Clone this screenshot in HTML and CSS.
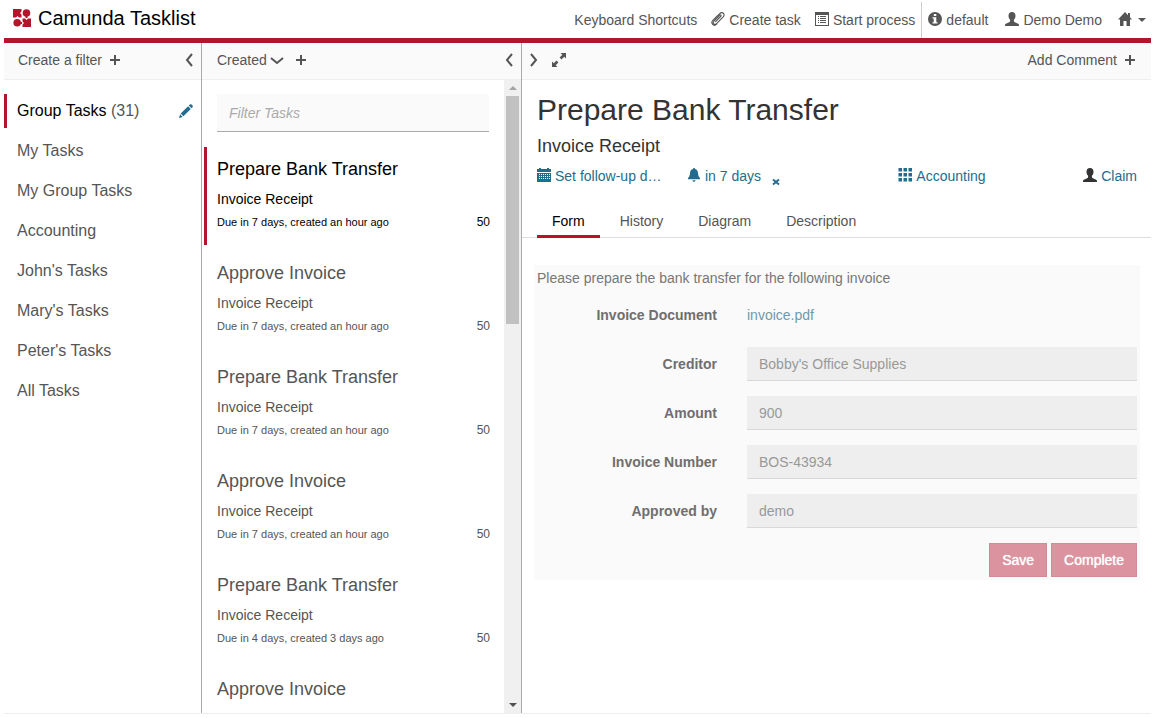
FILE: index.html
```html
<!DOCTYPE html>
<html lang="en">
<head>
<meta charset="utf-8">
<title>Camunda Tasklist</title>
<link rel="stylesheet" href="styles.css">
</head>
<body>
<svg class="sprite" aria-hidden="true">
  <symbol id="plus" viewBox="0 0 14 14"><path d="M6 2h2v4h4v2H8v4H6V8H2V6h4z"/></symbol>
  <symbol id="left" viewBox="0 0 14 14"><path d="M10 1 5 7l5 6" fill="none" stroke="currentColor" stroke-width="2"/></symbol>
  <symbol id="right" viewBox="0 0 14 14"><path d="m5 1 5 6-5 6" fill="none" stroke="currentColor" stroke-width="2"/></symbol>
  <symbol id="down" viewBox="0 0 14 14"><path d="m1 5 6 5 6-5" fill="none" stroke="currentColor" stroke-width="2"/></symbol>
  <symbol id="user" viewBox="0 0 14 14"><path d="M7 0c2.300 0 3.500 1.500 3.500 3.800 0 1.800-.7 3.200-1.600 4v1.300c0 .5.400.8 1 1.100l2.700 1.200c.9.400 1.400.8 1.400 1.600v1H0v-1c0-.8.500-1.200 1.400-1.600l2.700-1.200c.6-.3 1-.6 1-1.100V7.800c-.9-.8-1.600-2.200-1.600-4C3.500 1.500 4.700 0 7 0z"/></symbol>
  <symbol id="home" viewBox="0 0 14 14"><path d="M7 0 0 7.500h2V14h3.500V9h3v5H12V7.500h2l-2-2.200V1h-2v2.200z"/></symbol>
  <symbol id="info" viewBox="0 0 14 14"><path fill-rule="evenodd" d="M7 0a7 7 0 1 1 0 14A7 7 0 0 1 7 0zM5.800 2v2h2.500V2zM4.500 5.300v1.200h1.200v3.700H4.500v1.300h5v-1.300H8.300V5.300z"/></symbol>
  <symbol id="clip" viewBox="0 0 14 14"><path d="m4.600 9.700 5-5.200c1.100-1.200 0-2.200-1.100-1.100L3 9c-2 2.200.6 4.600 2.600 2.600l6.600-6.700c2.600-2.800-.9-5.800-3.500-3.300L2 8.200C-.9 11.300 2.700 15 5.700 12.200" fill="none" stroke="currentColor" stroke-width="1.100" stroke-linecap="round"/></symbol>
  <symbol id="list" viewBox="0 0 14 14"><path fill-rule="evenodd" d="M0 0h14v14H0zM1 3v10h12V3z"/><path d="M3 4h1v1H3zm2 0h6v1H5zM3 6h1v1H3zm2 0h6v1H5zM3 8h1v1H3zm2 0h6v1H5zM3 10h1v1H3zm2 0h6v1H5z"/></symbol>
  <symbol id="pencil" viewBox="0 0 14 14"><path d="M10.800.5c.5-.5 1.200-.5 1.700 0l1 1c.5.500.5 1.200 0 1.700l-1 1-2.700-2.700zM9.100 2.200l2.700 2.700-7.400 7.400-2.700-2.700zM1.100 10.300l2.600 2.600L0 14z"/></symbol>
  <symbol id="expand" viewBox="0 0 14 14"><path d="M8.500 0H14v5.500L12.200 3.700 9.500 6.400 7.600 4.500l2.700-2.700zM0 14V8.500l1.800 1.800 2.700-2.700 1.900 1.900-2.700 2.700L5.500 14z"/></symbol>
  <symbol id="calendar" viewBox="0 0 14 14"><path fill-rule="evenodd" d="M0 1h2V0h2v1h6V0h2v1h2v13H0zM0 4v1h14V4zM2 6v1h1V6zm2 0v1h1V6zm2 0v1h1V6zm2 0v1h1V6zm2 0v1h1V6zm2 0v1h1V6zM2 8v1h1V8zm2 0v1h1V8zm2 0v1h1V8zm2 0v1h1V8zm2 0v1h1V8zm2 0v1h1V8zM2 10v1h1v-1zm2 0v1h1v-1zm2 0v1h1v-1zm2 0v1h1v-1zm2 0v1h1v-1zm2 0v1h1v-1z"/></symbol>
  <symbol id="bell" viewBox="0 0 14 14"><path d="M7 0c.7 0 1 .5 1 1.100 1.800.4 2.800 1.900 3 3.900.2 2.400.6 3.700 2 5v1.200H1V10c1.400-1.300 1.800-2.600 2-5 .2-2 1.200-3.500 3-3.900C6 .5 6.300 0 7 0zM5.500 12.200h3c0 .9-.6 1.500-1.500 1.500s-1.500-.6-1.500-1.500z"/></symbol>
  <symbol id="grid" viewBox="0 0 14 14"><path d="M.5 0h3.500v3.500H.5zM5.500 0h3.500v3.500H5.500zM10.500 0H14v3.500h-3.500zM.5 5h3.500v3.500H.5zM5.500 5h3.500v3.500H5.500zM10.500 5H14v3.500h-3.500zM.5 10h3.500v3.500H.5zM5.500 10h3.500v3.500H5.500zM10.500 10H14v3.500h-3.500z"/></symbol>
  <symbol id="cross" viewBox="0 0 8 8"><path d="m1 1.500 6 5M7 1.500l-6 5" stroke="currentColor" stroke-width="2"/></symbol>
  <symbol id="caret-down" viewBox="0 0 8 4"><path d="M0 0h8L4 4z"/></symbol>
  <symbol id="caret-up" viewBox="0 0 8 4"><path d="M0 4h8L4 0z"/></symbol>
</svg>

<header class="topbar">
  <a class="brand" href="#">
    <svg class="logo" viewBox="0 0 18 18" aria-hidden="true"><path d="M0 0h8.500v2.500L7 4l1.500 1.500v3H6L4.500 7 3 8.500H0zM18 18H9.500v-2.500L11 14l-1.500-1.500v-3H12l1.500 1.500L15 9.500h3z"/><circle cx="13.500" cy="4" r="3.800"/><circle cx="4.200" cy="13.800" r="3.800"/><path d="M12.500 7h2v2h-2zM7 13h2v2H7z"/></svg>
    <span>Camunda Tasklist</span>
  </a>
  <nav class="topnav">
    <a href="#">Keyboard Shortcuts</a>
    <a href="#"><svg class="icon"><use href="#clip"/></svg>Create task</a>
    <a class="last" href="#"><svg class="icon"><use href="#list"/></svg>Start process</a>
    <a class="divided" href="#"><svg class="icon"><use href="#info"/></svg>default</a>
    <a class="account" href="#"><svg class="icon"><use href="#user"/></svg>Demo Demo</a>
    <a class="apps" href="#" aria-label="Apps"><svg class="icon"><use href="#home"/></svg><svg class="caret"><use href="#caret-down"/></svg></a>
  </nav>
</header>

<main class="columns">
  <section class="filters">
    <div class="toolbar">
      <button type="button">Create a filter<svg class="icon"><use href="#plus"/></svg></button>
      <button class="push" type="button" aria-label="Collapse filters"><svg class="icon"><use href="#left"/></svg></button>
    </div>
    <ul class="filter-list">
      <li class="active"><a href="#">Group Tasks <span>(31)</span></a><button type="button" aria-label="Edit filter"><svg class="icon"><use href="#pencil"/></svg></button></li>
      <li><a href="#">My Tasks</a></li>
      <li><a href="#">My Group Tasks</a></li>
      <li><a href="#">Accounting</a></li>
      <li><a href="#">John's Tasks</a></li>
      <li><a href="#">Mary's Tasks</a></li>
      <li><a href="#">Peter's Tasks</a></li>
      <li><a href="#">All Tasks</a></li>
    </ul>
  </section>

  <section class="tasks">
    <div class="toolbar">
      <button class="sorting" type="button">Created<svg class="icon"><use href="#down"/></svg></button>
      <button type="button" aria-label="Add sorting"><svg class="icon"><use href="#plus"/></svg></button>
      <button class="push" type="button" aria-label="Collapse tasks"><svg class="icon"><use href="#left"/></svg></button>
    </div>
    <div class="task-area">
      <div class="task-scroll">
        <input class="search" type="text" placeholder="Filter Tasks" aria-label="Filter Tasks">
        <ul class="task-list">
          <li class="active"><h4>Prepare Bank Transfer</h4><p>Invoice Receipt</p><div class="due"><small>Due in 7 days, created an hour ago</small><span>50</span></div></li>
          <li><h4>Approve Invoice</h4><p>Invoice Receipt</p><div class="due"><small>Due in 7 days, created an hour ago</small><span>50</span></div></li>
          <li><h4>Prepare Bank Transfer</h4><p>Invoice Receipt</p><div class="due"><small>Due in 7 days, created an hour ago</small><span>50</span></div></li>
          <li><h4>Approve Invoice</h4><p>Invoice Receipt</p><div class="due"><small>Due in 7 days, created an hour ago</small><span>50</span></div></li>
          <li><h4>Prepare Bank Transfer</h4><p>Invoice Receipt</p><div class="due"><small>Due in 4 days, created 3 days ago</small><span>50</span></div></li>
          <li><h4>Approve Invoice</h4></li>
        </ul>
      </div>
      <div class="scrollbar" aria-hidden="true">
        <svg class="caret up"><use href="#caret-up"/></svg>
        <div class="track"><div class="thumb"></div></div>
        <svg class="caret"><use href="#caret-down"/></svg>
      </div>
    </div>
  </section>

  <section class="detail">
    <div class="toolbar">
      <button type="button" aria-label="Expand tasks"><svg class="icon"><use href="#right"/></svg></button>
      <button type="button" aria-label="Maximize"><svg class="icon"><use href="#expand"/></svg></button>
      <button class="push" type="button">Add Comment<svg class="icon"><use href="#plus"/></svg></button>
    </div>
    <div class="task-head">
      <h1>Prepare Bank Transfer</h1>
      <h2>Invoice Receipt</h2>
      <div class="meta">
        <a href="#"><svg class="icon"><use href="#calendar"/></svg>Set follow-up d…</a>
        <div class="due-date"><a href="#"><svg class="icon"><use href="#bell"/></svg>in 7 days</a><button type="button" aria-label="Remove due date"><svg class="cross"><use href="#cross"/></svg></button></div>
        <a class="groups" href="#"><svg class="icon"><use href="#grid"/></svg>Accounting</a>
        <a class="claim" href="#"><svg class="icon"><use href="#user"/></svg>Claim</a>
      </div>
    </div>
    <nav class="tabs">
      <a class="active" href="#">Form</a>
      <a href="#">History</a>
      <a href="#">Diagram</a>
      <a href="#">Description</a>
    </nav>
    <form class="task-form">
      <p>Please prepare the bank transfer for the following invoice</p>
      <div class="row document"><span class="label">Invoice Document</span><a href="#">invoice.pdf</a></div>
      <div class="row"><label for="creditor">Creditor</label><input id="creditor" type="text" value="Bobby's Office Supplies" disabled></div>
      <div class="row"><label for="amount">Amount</label><input id="amount" type="text" value="900" disabled></div>
      <div class="row"><label for="number">Invoice Number</label><input id="number" type="text" value="BOS-43934" disabled></div>
      <div class="row"><label for="approver">Approved by</label><input id="approver" type="text" value="demo" disabled></div>
      <div class="actions"><button type="button" disabled>Save</button><button type="submit" disabled>Complete</button></div>
    </form>
  </section>
</main>
</body>
</html>
```
FILE: styles.css
```css
* { box-sizing: border-box; }

body {
  margin: 0;
  padding: 0 6px 4px 4px;
  height: 100vh;
  display: flex;
  flex-direction: column;
  overflow: hidden;
  background: #fff;
  color: #555;
  font: 14px/20px "Liberation Sans", Arial, sans-serif;
}

h1, h2, h4, p, ul { margin: 0; padding: 0; font-weight: 400; }
ul { list-style: none; }
a { color: inherit; text-decoration: none; }
button { margin: 0; padding: 0; border: 0; background: none; color: inherit; font: inherit; }
input { font: inherit; }
svg { fill: currentColor; flex: none; }

.sprite { display: none; }
.icon { width: 14px; height: 14px; }
.caret { width: 8px; height: 4px; }

.topbar {
  display: flex;
  justify-content: space-between;
  height: 43px;
  border-bottom: 5px solid #b5152b;
}
.brand {
  display: flex;
  align-items: center;
  gap: 7px;
  padding: 0 0 2px 9px;
  color: #000;
  font-size: 20px;
}
.logo { width: 18px; height: 18px; color: #b5152b; }
.topnav { display: flex; align-items: stretch; margin-top: 2px; }
.topnav a { display: flex; align-items: center; gap: 4px; padding: 0 7px; }
.topnav .icon, .meta .icon { margin-bottom: 2px; }
.topnav .last { padding-right: 6px; }
.topnav .divided { padding-left: 6px; border-left: 1px solid #ccc; }
.topnav .account { padding-left: 10px; }
.topnav .apps { padding-left: 9px; padding-right: 5px; gap: 6px; }

.columns {
  flex: 1;
  min-height: 0;
  display: grid;
  grid-template-columns: 198px 320px 1fr;
  border-bottom: 1px solid #eee;
}
.filters, .tasks { border-right: 1px solid #aaa; min-height: 0; }
.tasks { display: flex; flex-direction: column; }

.toolbar {
  display: flex;
  align-items: center;
  height: 37px;
  padding: 0 5px 2px 14px;
  border-bottom: 1px solid #eee;
  background: #fafafa;
}
.tasks .toolbar { padding-left: 15px; }
.toolbar button { display: flex; align-items: center; gap: 6px; }
.toolbar .push { margin-left: auto; }
.toolbar .sorting { gap: 3px; margin-right: 10px; }
.detail .toolbar { padding: 0 14px 2px 4px; }
.detail .toolbar button + button:not(.push) { margin-left: 12px; }

.filter-list { display: flex; flex-direction: column; gap: 6px; padding-top: 14px; font-size: 16px; }
.filter-list li {
  display: flex;
  align-items: center;
  justify-content: space-between;
  height: 34px;
  padding: 0 8px 0 10px;
  border-left: 3px solid transparent;
}
.filter-list .active { border-color: #b5152b; color: #000; }
.filter-list .active span { color: #555; }
.filter-list button { display: flex; color: #226d8f; }

.task-area { flex: 1; min-height: 0; display: flex; }
.task-scroll { flex: 1; overflow: hidden; padding-top: 14px; }
.search {
  display: block;
  width: calc(100% - 30px);
  height: 38px;
  margin: 0 15px 15px;
  padding: 0 12px;
  border: 0;
  border-bottom: 1px solid #aaa;
  background: #fafafa;
}
.search::placeholder { color: #aaa; font-style: italic; opacity: 1; }
.task-list { display: flex; flex-direction: column; gap: 6px; padding: 0 14px 0 2px; }
.task-list li { height: 98px; padding: 12px 0 0 10px; border-left: 3px solid transparent; }
.task-list .active { border-color: #b5152b; color: #000; }
.task-list h4 { font-size: 18px; margin-bottom: 10px; }
.due { display: flex; justify-content: space-between; margin-top: 3px; font-size: 12px; }
.due small { font-size: 11px; }

.scrollbar {
  width: 17px;
  display: flex;
  flex-direction: column;
  align-items: center;
  padding: 6px 0;
  background: #f0f0f0;
  color: #505050;
}
.scrollbar .up { color: #a3a3a3; }
.track { flex: 1; width: 13px; padding: 6px 0; }
.thumb { height: 38%; background: #c1c1c1; }

.detail { min-width: 0; }
.task-head { padding: 12px 14px 0 15px; color: #333; }
.task-head h1 { font-size: 30px; line-height: 36px; }
.task-head h2 { margin-top: 8px; font-size: 18px; }
.meta {
  display: grid;
  grid-template-columns: 25% 25% 35% 15%;
  margin-top: 10px;
  color: #226d8f;
}
.meta > a, .due-date a { display: flex; align-items: center; gap: 4px; white-space: nowrap; }
.due-date { display: flex; align-items: center; gap: 11px; }
.due-date button { display: flex; align-self: flex-end; }
.cross { width: 8px; height: 8px; }
.meta .groups { justify-content: center; }
.meta .claim { justify-content: flex-end; }
.claim .icon { color: #333; }

.tabs { display: flex; gap: 5px; margin-top: 18px; padding-left: 15px; border-bottom: 1px solid #ddd; }
.tabs a { padding: 7px 15px 4px; margin-bottom: -1px; border-bottom: 3px solid transparent; }
.tabs .active { color: #000; border-color: #b5152b; }

.task-form { margin: 27px 11px 0 12px; padding: 3px; background: #fafafa; color: #777; }
.row { display: grid; grid-template-columns: 30% 1fr; gap: 30px; align-items: center; margin-bottom: 15px; }
.row.document { margin: 17px 0 22px; }
.row label, .label { text-align: right; font-weight: 700; color: #6f6f6f; }
.row a { color: #7099aa; }
.row input {
  width: 100%;
  height: 34px;
  padding: 0 12px;
  border: 0;
  border-bottom: 1px solid #d9d9d9;
  border-radius: 0;
  background: #eee;
  color: #999;
}
.actions { display: flex; justify-content: flex-end; gap: 4px; }
.actions button {
  height: 34px;
  padding: 0 12px;
  border: 1px solid #d28a95;
  background: #db949f;
  color: #fff;
  text-shadow: 0 0 1px #fff;
}
```
